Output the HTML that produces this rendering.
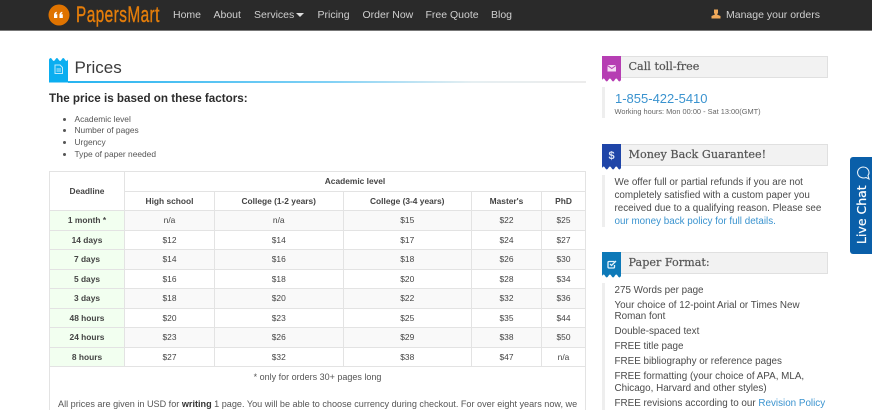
<!DOCTYPE html>
<html><head><meta charset="utf-8"><title>Prices</title>
<style>
html,body{margin:0;padding:0;background:#fff}
body{position:relative;width:872px;height:410px;overflow:hidden;font-family:"Liberation Sans",Arial,sans-serif;color:#444;filter:blur(.25px)}
.a{position:absolute;white-space:nowrap}
.nav{top:7.5px;font-size:10.5px;line-height:14px;color:#cfcfcf}
.h{font-family:"DejaVu Serif",serif;font-size:11.2px;color:#555;line-height:16px;-webkit-text-stroke:.2px #555}
.s{font-size:9.85px;line-height:13px;color:#4a4a4a}
a{color:#3a93cf;text-decoration:none}
.box{position:absolute;left:621px;width:206px;height:20px;background:#f2f2f2;border:1px solid #e0e0e0;border-left:0}
.bar{position:absolute;left:602px;width:3px;background:#eee}
li{margin:0;padding:0}
table{position:absolute;left:49px;top:171px;width:537px;border-collapse:collapse;table-layout:fixed;font-size:8.4px;color:#444}
td,th{border:1px solid #e3e3e3;text-align:center;padding:0;height:18.5px;line-height:12px;font-weight:normal}
th,.d{font-weight:bold;color:#444}
.d{background:#f2fff0}
.z td:not(.d){background:#f9f9f9}
</style></head>
<body>
<div class="a" style="left:0;top:0;width:872px;height:30px;background:#2a2a2a;border-bottom:1px solid #777"></div>
<svg class="a" style="left:48px;top:4px" width="22" height="22" viewBox="0 0 22 22"><circle cx="11" cy="11" r="10.5" fill="#df7300"/><path d="M6 14v-3c0-1.700 1-3 2.800-3.300v1.400c-.7.200-1.100.7-1.100 1.200h1.600V14zM11.500 14v-3c0-1.700 1-3 2.800-3.300v1.400c-.7.200-1.100.7-1.100 1.200h1.600V14z" fill="#fff"/></svg>
<div class="a" style="left:76px;top:3px;font-size:22px;line-height:24px;color:#e47d0a;transform:scaleX(.7);transform-origin:0 0;letter-spacing:.6px;-webkit-text-stroke:.4px #e47d0a">PapersMart</div>
<div class="a nav" style="left:173px">Home</div>
<div class="a nav" style="left:213.500px">About</div>
<div class="a nav" style="left:254px">Services</div>
<div class="a" style="left:296px;top:12.500px;width:0;height:0;border-left:4px solid transparent;border-right:4px solid transparent;border-top:4.500px solid #ddd"></div>
<div class="a nav" style="left:317.500px">Pricing</div>
<div class="a nav" style="left:362.500px">Order Now</div>
<div class="a nav" style="left:425.500px">Free Quote</div>
<div class="a nav" style="left:491px">Blog</div>
<svg class="a" style="left:711px;top:9px" width="10" height="10" viewBox="0 0 10 10"><path d="M3 .5h4v3.500L6 5.500l3.500 1.500v2.500H.5V7L4 5.500 3 4z" fill="#f0a95a"/></svg>
<div class="a nav" style="left:726px">Manage your orders</div>

<svg class="a" style="left:49px;top:57px" width="19" height="25.500" viewBox="0 0 19 25.500"><path d="M0 2.500Q1.600 -.5 3.170 2.500T6.330 2.500 9.500 2.500 12.670 2.500 15.830 2.500 19 2.500V25.500H0z" fill="#0baef0"/><path d="M6 8h5l2.500 2.500V16.500H6zM7.500 12h4.500M7.500 14h4.500" fill="none" stroke="#bfe9fb" stroke-width="1"/></svg>
<div class="a" style="left:68px;top:80.500px;width:518px;height:2px;background:linear-gradient(90deg,#27b4f0 0%,#7fd0f5 50%,#e6eff2 78%,#ececec 100%)"></div>
<div class="a" style="left:74.500px;top:57px;font-size:17px;line-height:22px;color:#3b3b3b">Prices</div>
<div class="a" style="left:49px;top:90.500px;font-size:11.650px;line-height:15px;font-weight:bold;color:#2c2c2c">The price is based on these factors:</div>
<ul class="a" style="left:74.500px;top:113.500px;margin:0;padding:0;font-size:8.400px;line-height:11.900px;color:#555">
<li>Academic level</li><li>Number of pages</li><li>Urgency</li><li>Type of paper needed</li></ul>

<table>
<colgroup><col style="width:75px"><col style="width:90px"><col style="width:128.500px"><col style="width:128.500px"><col style="width:70px"><col></colgroup>
<tr><th rowspan="2">Deadline</th><th colspan="5">Academic level</th></tr>
<tr><th>High school</th><th>College (1-2 years)</th><th>College (3-4 years)</th><th>Master's</th><th>PhD</th></tr>
<tr class="z"><td class="d">1 month *</td><td>n/a</td><td>n/a</td><td>$15</td><td>$22</td><td>$25</td></tr>
<tr><td class="d">14 days</td><td>$12</td><td>$14</td><td>$17</td><td>$24</td><td>$27</td></tr>
<tr class="z"><td class="d">7 days</td><td>$14</td><td>$16</td><td>$18</td><td>$26</td><td>$30</td></tr>
<tr><td class="d">5 days</td><td>$16</td><td>$18</td><td>$20</td><td>$28</td><td>$34</td></tr>
<tr class="z"><td class="d">3 days</td><td>$18</td><td>$20</td><td>$22</td><td>$32</td><td>$36</td></tr>
<tr><td class="d">48 hours</td><td>$20</td><td>$23</td><td>$25</td><td>$35</td><td>$44</td></tr>
<tr class="z"><td class="d">24 hours</td><td>$23</td><td>$26</td><td>$29</td><td>$38</td><td>$50</td></tr>
<tr><td class="d">8 hours</td><td>$27</td><td>$32</td><td>$38</td><td>$47</td><td>n/a</td></tr>
</table>
<div class="a" style="left:49px;top:366px;width:537px;height:44px;border-left:1px solid #e3e3e3;border-right:1px solid #e3e3e3;box-sizing:border-box"></div>
<div class="a" style="left:49px;width:537px;top:370.500px;text-align:center;font-size:9px;line-height:12px;color:#555">* only for orders 30+ pages long</div>
<div class="a" style="left:58px;top:397.500px;font-size:9.100px;line-height:12px;color:#555">All prices are given in USD for <b style="color:#333">writing</b> 1 page. You will be able to choose currency during checkout. For over eight years now, we</div>

<div class="box" style="top:56px"></div>
<svg class="a" style="left:602px;top:56px" width="19" height="26.500" viewBox="0 0 19 26.500"><path d="M0 0H19V24Q17.400 27 15.830 24T12.670 24 9.500 24 6.330 24 3.170 24 0 24z" fill="#b63eb3"/><rect x="5.500" y="9" width="8.500" height="6.500" fill="#f4dcf3"/><path d="M5.500 9.500l4.250 3 4.250-3" fill="none" stroke="#b63eb3" stroke-width="1"/></svg>
<div class="a h" style="left:628.500px;top:58.500px">Call toll-free</div>
<div class="bar" style="top:87px;height:31px"></div>
<div class="a" style="left:615px;top:91px;font-size:13px;line-height:16px;color:#3a93cf">1-855-422-5410</div>
<div class="a" style="left:614.500px;top:106px;font-size:7.400px;line-height:11px;color:#666">Working hours: Mon 00:00 - Sat 13:00(GMT)</div>

<div class="box" style="top:144px"></div>
<svg class="a" style="left:602px;top:144px" width="19" height="26.500" viewBox="0 0 19 26.500"><path d="M0 0H19V24Q17.400 27 15.830 24T12.670 24 9.500 24 6.330 24 3.170 24 0 24z" fill="#1f45a8"/></svg>
<div class="a" style="left:602px;width:19px;top:149px;text-align:center;font-size:11px;line-height:14px;font-weight:bold;color:#dfe6f7">$</div>
<div class="a h" style="left:628.500px;top:146.500px">Money Back Guarantee!</div>
<div class="bar" style="top:175px;height:52px"></div>
<div class="a s" style="left:614.500px;top:175.500px">We offer full or partial refunds if you are not</div>
<div class="a s" style="left:614.500px;top:188.500px">completely satisfied with a custom paper you</div>
<div class="a s" style="left:614.500px;top:201.500px">received due to a qualifying reason. Please see</div>
<div class="a s" style="left:614.500px;top:214.500px"><a>our money back policy for full details.</a></div>

<div class="box" style="top:252px"></div>
<svg class="a" style="left:602px;top:252px" width="19" height="26.500" viewBox="0 0 19 26.500"><path d="M0 0H19V24Q17.400 27 15.830 24T12.670 24 9.500 24 6.330 24 3.170 24 0 24z" fill="#0d79b8"/><path d="M12.500 9.500H7a1 1 0 0 0-1 1v4.500a1 1 0 0 0 1 1h4.500a1 1 0 0 0 1-1v-2M8 12l1.500 1.500L14 9" fill="none" stroke="#e3f2fb" stroke-width="1.300"/></svg>
<div class="a h" style="left:628.500px;top:254.500px">Paper Format:</div>
<div class="bar" style="top:283px;height:127px"></div>
<div class="a s" style="left:614.500px;top:283.500px">275 Words per page</div>
<div class="a s" style="left:614.500px;top:298.500px">Your choice of 12-point Arial or Times New</div>
<div class="a s" style="left:614.500px;top:310px">Roman font</div>
<div class="a s" style="left:614.500px;top:325px">Double-spaced text</div>
<div class="a s" style="left:614.500px;top:340px">FREE title page</div>
<div class="a s" style="left:614.500px;top:355px">FREE bibliography or reference pages</div>
<div class="a s" style="left:614.500px;top:370px">FREE formatting (your choice of APA, MLA,</div>
<div class="a s" style="left:614.500px;top:382px">Chicago, Harvard and other styles)</div>
<div class="a s" style="left:614.500px;top:397px">FREE revisions according to our <a>Revision Policy</a></div>

<div class="a" style="left:850px;top:156.500px;width:22px;height:97.500px;background:#0a5fa9;border-radius:3px 0 0 3px"></div>
<div class="a" style="left:854px;top:243.500px;font-size:12.500px;line-height:16px;color:#fff;transform:rotate(-90deg);transform-origin:0 0;font-family:'DejaVu Sans',sans-serif;-webkit-text-stroke:.2px #fff">Live Chat</div>
<svg class="a" style="left:854.500px;top:165px" width="16" height="16" viewBox="0 0 16 16"><path d="M8 2a6 5.500 0 0 1 5 8.500L14 14l-3-1.500A6 5.500 0 1 1 8 2z" fill="none" stroke="#e8f1f9" stroke-width="1.100"/></svg>
</body></html>
